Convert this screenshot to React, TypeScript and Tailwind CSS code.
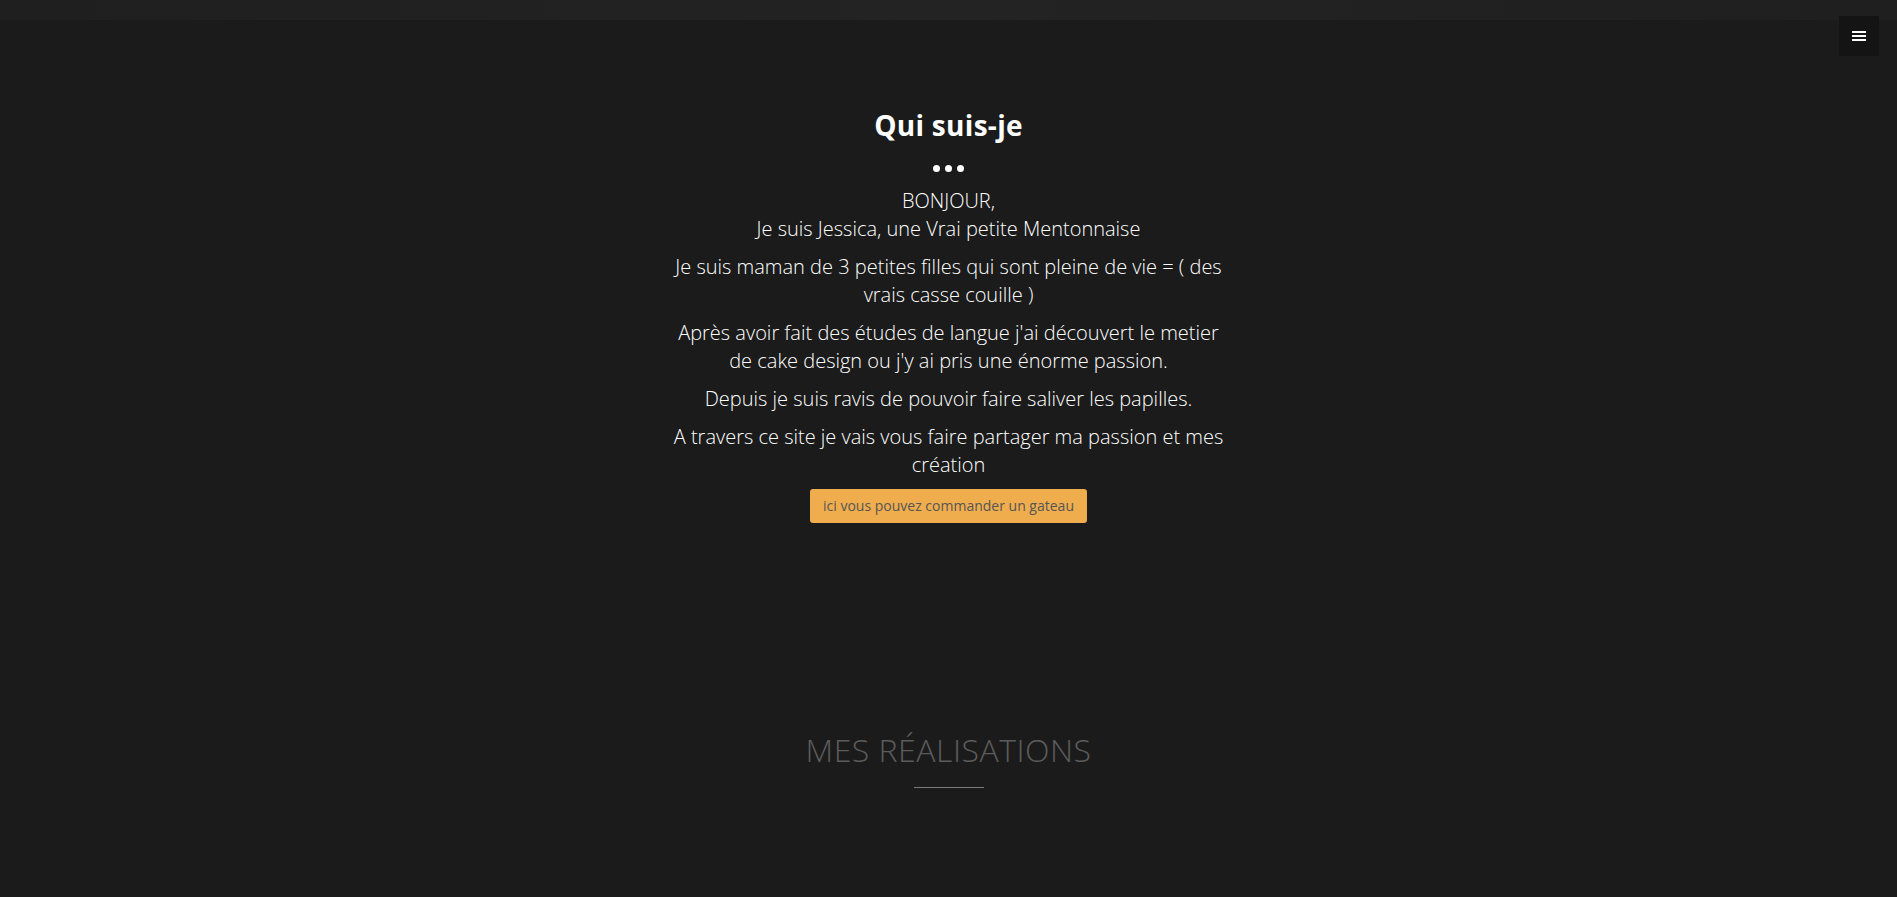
import React from 'react';

const paragraphs: string[] = [
  "Je suis maman de 3 petites filles qui sont pleine de vie = ( des vrais casse couille )",
  "Après avoir fait des études de langue j'ai découvert le metier de cake design ou j'y ai pris une énorme passion.",
  "Depuis je suis ravis de pouvoir faire saliver les papilles.",
  "A travers ce site je vais vous faire partager ma passion et mes création",
];

const App: React.FC = () => {
  return (
    <div className="min-h-screen bg-[#1b1b1b] text-white font-['Open_Sans',sans-serif] overflow-hidden">
      {/* top strip */}
      <div className="h-[20px] bg-[#202020] bg-gradient-to-r from-[#1f1f1f] via-[#232323] to-[#1f1f1f]" />

      <button className="fixed top-[16px] right-[18px] w-[40px] h-[40px] bg-[#141414] flex items-center justify-center">
        <span className="flex flex-col gap-[2px]">
          <span className="block w-[14px] h-[2px] bg-white" />
          <span className="block w-[14px] h-[2px] bg-white" />
          <span className="block w-[14px] h-[2px] bg-white" />
        </span>
      </button>

      <section className="flex flex-col items-center pt-[90px]">
        <h2 className="text-[28px] leading-[1.1] font-bold tracking-[0.3px]">Qui suis-je</h2>
        <div className="flex gap-[5px] mt-[24px]">
          <span className="w-[7px] h-[7px] rounded-full bg-white" />
          <span className="w-[7px] h-[7px] rounded-full bg-white" />
          <span className="w-[7px] h-[7px] rounded-full bg-white" />
        </div>

        <div className="max-w-[560px] text-center text-[20px] leading-[28px] font-light mt-[15px]">
          <p className="mb-[10px]">
            BONJOUR,
            <br />
            Je suis Jessica, une Vrai petite Mentonnaise
          </p>
          {paragraphs.map((p) => (
            <p key={p} className="mb-[10px]">{p}</p>
          ))}
        </div>

        <a
          href="#"
          className="px-[13px] h-[34px] flex items-center bg-[#f0ad4e] rounded-[3px] text-[14px] text-[#555] font-normal"
        >
          ici vous pouvez commander un gateau
        </a>
      </section>

      <section className="flex flex-col items-center mt-[203px]">
        <h2 className="text-[32px] font-light text-[#5c5c5c] uppercase tracking-[0.5px]">Mes réalisations</h2>
        <div className="w-[70px] h-px bg-[#7a7a7a] mt-[13px]" />
      </section>
    </div>
  );
};

export default App;
